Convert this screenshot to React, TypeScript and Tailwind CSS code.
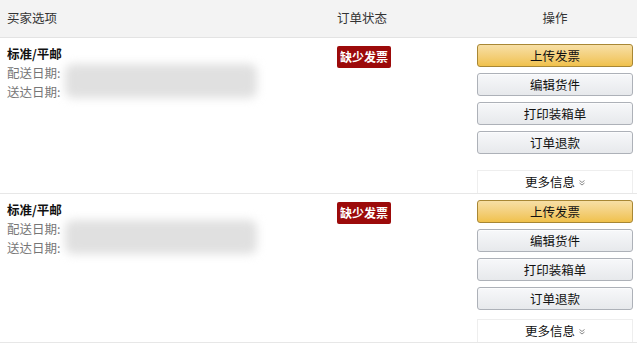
import React from 'react';

const font = { fontFamily: '"Noto Sans CJK SC", "Noto Sans", sans-serif' };

function GrayButton({ label }: { label: string }) {
  return (
    <button className="h-[23px] w-full rounded-[3px] border border-[#adb1b8] bg-gradient-to-b from-[#f7f8fa] to-[#e7e9ec] text-[12.5px] leading-[21px] text-[#111] shadow-[inset_0_1px_0_rgba(255,255,255,0.6)]">
      {label}
    </button>
  );
}

function OrderRow({ moreGap }: { moreGap: string }) {
  return (
    <div className="flex border-b border-[#e7e7e7]">
      <div className="w-[337px] pl-[7px] pt-[6px]">
        <div className="text-[12.5px] font-bold leading-[19px] text-[#111]">标准/平邮</div>
        <div className="flex">
          <div className="text-[12.5px] leading-[19px] text-[#767676]">
            <div>配送日期:</div>
            <div>送达日期:</div>
          </div>
          <div className="ml-[5px] mt-[1px] h-[34px] w-[192px] rounded-[8px] bg-[#e0e0e0] blur-[5px]" />
        </div>
      </div>
      <div className="w-[140px] pt-[5px]">
        <span className="inline-block h-[22px] rounded-[2px] bg-[#9c0a0a] px-[3px] text-[12px] font-bold leading-[22px] text-white">
          缺少发票
        </span>
      </div>
      <div className="mr-[4px] flex w-[156px] flex-col pt-[6px]">
        <div className="flex flex-col gap-[6px]">
          <button className="h-[23px] w-full rounded-[3px] border border-[#a88734] bg-gradient-to-b from-[#f7dfa5] to-[#f0c14b] text-[12.5px] leading-[21px] text-[#111]">
            上传发票
          </button>
          <GrayButton label="编辑货件" />
          <GrayButton label="打印装箱单" />
          <GrayButton label="订单退款" />
        </div>
        <div className={`${moreGap} flex h-[23px] items-center justify-center border-x border-t border-[#eeeeee] bg-white text-[12.5px] text-[#111]`}>
          更多信息
          <svg className="ml-[4px] mt-[2px]" width="6" height="6" viewBox="0 0 6 6" fill="none" stroke="#888" strokeWidth="1">
            <path d="M0.5 0.5 L3 2.5 L5.5 0.5" />
            <path d="M0.5 3 L3 5 L5.5 3" />
          </svg>
        </div>
      </div>
    </div>
  );
}

export default function App() {
  return (
    <div className="h-[349px] w-[637px] overflow-hidden bg-white" style={font}>
      <div className="flex h-[38px] items-center border-b border-[#e3e3e3] bg-[#f3f3f3] text-[12.5px] text-[#333]">
        <div className="w-[337px] pl-[7px]">买家选项</div>
        <div className="w-[140px]">订单状态</div>
        <div className="mr-[4px] w-[156px] text-center">操作</div>
      </div>
      <OrderRow moreGap="mt-[16px]" />
      <OrderRow moreGap="mt-[9px]" />
    </div>
  );
}
